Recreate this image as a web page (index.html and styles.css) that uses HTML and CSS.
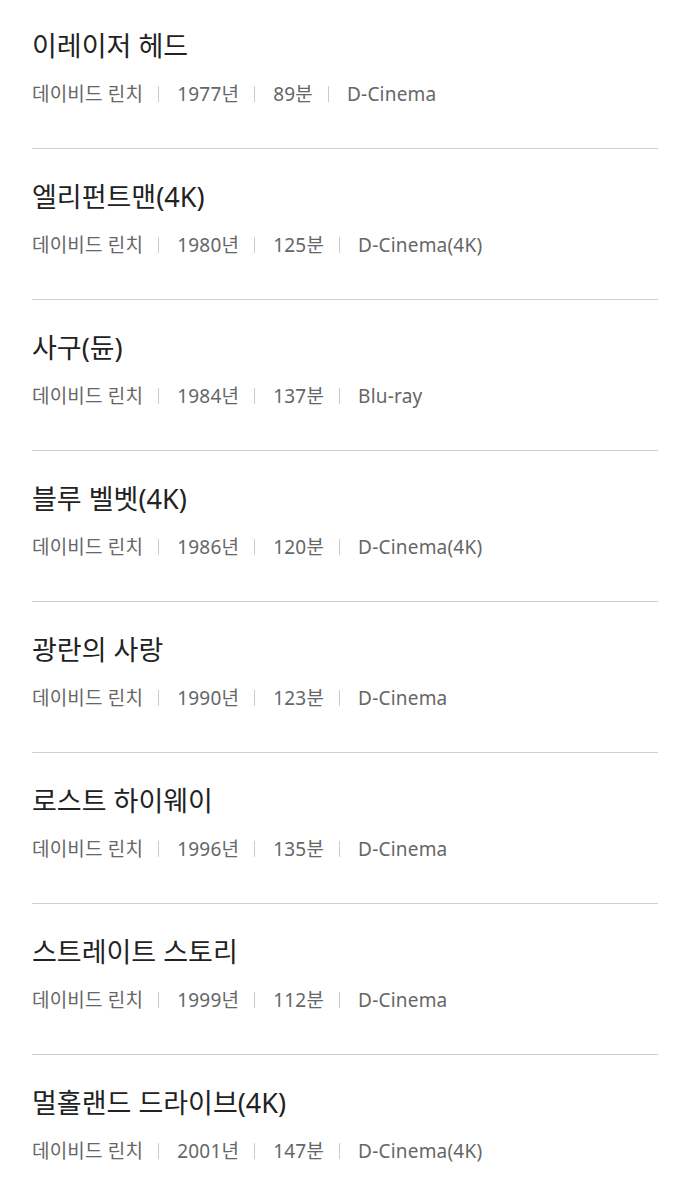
FILE: index.html
```html
<!DOCTYPE html>
<html lang="ko">
<head>
  <meta charset="UTF-8">
  <meta name="viewport" content="width=device-width, initial-scale=1.0">
  <title>데이비드 린치</title>
  <link rel="stylesheet" href="styles.css">
</head>
<body>

  <ul class="movie-list">
    <li class="movie">
      <h3 class="movie-title">이레이저 헤드</h3>
      <div class="movie-meta">
        <span>데이비드 린치</span><span>1977년</span><span>89분</span><span>D-Cinema</span>
      </div>
    </li>
    <li class="movie">
      <h3 class="movie-title">엘리펀트맨(4K)</h3>
      <div class="movie-meta">
        <span>데이비드 린치</span><span>1980년</span><span>125분</span><span>D-Cinema(4K)</span>
      </div>
    </li>
    <li class="movie">
      <h3 class="movie-title">사구(듄)</h3>
      <div class="movie-meta">
        <span>데이비드 린치</span><span>1984년</span><span>137분</span><span>Blu-ray</span>
      </div>
    </li>
    <li class="movie">
      <h3 class="movie-title">블루 벨벳(4K)</h3>
      <div class="movie-meta">
        <span>데이비드 린치</span><span>1986년</span><span>120분</span><span>D-Cinema(4K)</span>
      </div>
    </li>
    <li class="movie">
      <h3 class="movie-title">광란의 사랑</h3>
      <div class="movie-meta">
        <span>데이비드 린치</span><span>1990년</span><span>123분</span><span>D-Cinema</span>
      </div>
    </li>
    <li class="movie">
      <h3 class="movie-title">로스트 하이웨이</h3>
      <div class="movie-meta">
        <span>데이비드 린치</span><span>1996년</span><span>135분</span><span>D-Cinema</span>
      </div>
    </li>
    <li class="movie">
      <h3 class="movie-title">스트레이트 스토리</h3>
      <div class="movie-meta">
        <span>데이비드 린치</span><span>1999년</span><span>112분</span><span>D-Cinema</span>
      </div>
    </li>
    <li class="movie">
      <h3 class="movie-title">멀홀랜드 드라이브(4K)</h3>
      <div class="movie-meta">
        <span>데이비드 린치</span><span>2001년</span><span>147분</span><span>D-Cinema(4K)</span>
      </div>
    </li>
  </ul>

</body>
</html>
```

FILE: styles.css
```css
/* Global styles */
* {
  margin: 0;
  padding: 0;
  box-sizing: border-box;
}

body {
  background: #fff;
  color: #222;
  font-family: 'Noto Sans', 'Noto Sans CJK KR', sans-serif;
  padding: 0 20px 0 32px;
}

/* Movie list */
.movie-list {
  list-style: none;
}

.movie {
  padding: 30px 0 41px;
  border-bottom: 1px solid #d0d0d0;
}

.movie:first-child {
  padding-top: 28px;
}

.movie-title {
  font-size: 27px;
  font-weight: 400;
  line-height: 36px;
  color: #222;
  margin-bottom: 17px;
}

.movie-meta {
  display: flex;
  align-items: center;
  font-size: 19px;
  line-height: 26px;
  letter-spacing: 0.2px;
  color: #666;
}

.movie-meta span + span::before {
  content: '';
  display: inline-block;
  width: 1px;
  height: 16px;
  background-color: #ccc;
  margin: 0 18px 0 15px;
  vertical-align: -1px;
}
```
